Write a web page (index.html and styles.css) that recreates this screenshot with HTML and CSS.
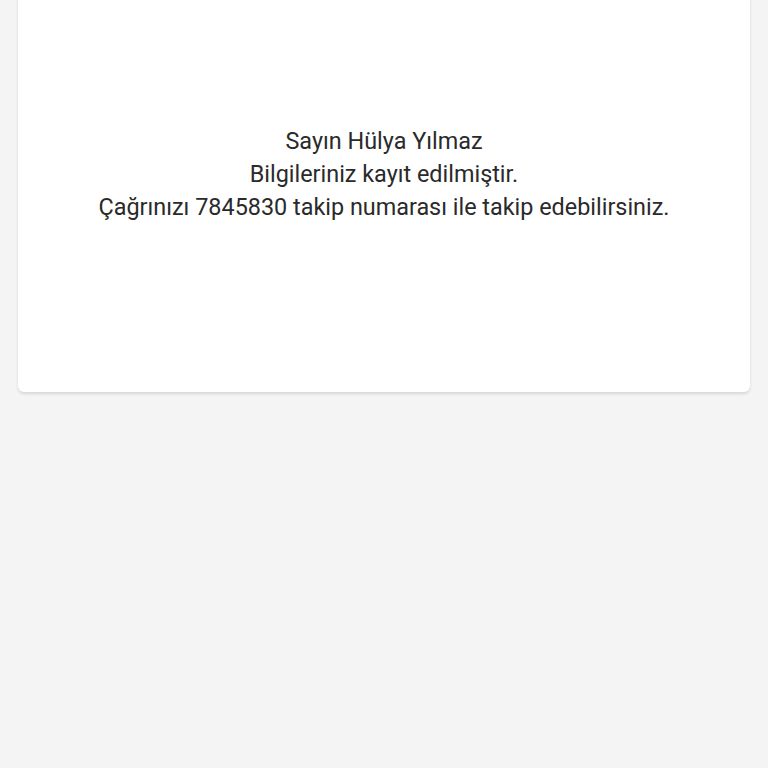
FILE: index.html
```html
<!DOCTYPE html>
<html lang="tr">
<head>
    <meta charset="UTF-8">
    <meta name="viewport" content="width=device-width, initial-scale=1.0">
    <title>Kayıt</title>
    <link rel="stylesheet" href="styles.css">
</head>
<body>
    <div class="page">
        <div class="card">
            <div class="message">
                <p>Sayın Hülya Yılmaz</p>
                <p>Bilgileriniz kayıt edilmiştir.</p>
                <p>Çağrınızı 7845830 takip numarası ile takip edebilirsiniz.</p>
            </div>
        </div>
    </div>
</body>
</html>
```

FILE: styles.css
```css
body {
    margin: 0;
    padding: 0;
    background: #f4f4f4;
    font-family: Roboto, 'Noto Sans', Arial, sans-serif;
    color: #2a2a2a;
    height: 100vh;
    overflow: hidden;
}

.page {
    padding: 0 18px;
}

.card {
    margin-top: -44px;
    height: 436px;
    background: #fff;
    border-radius: 6px;
    box-shadow: 0px 2px 3px rgba(0, 0, 0, 0.12);
    display: flex;
    justify-content: center;
    align-items: center;
}

.message {
    text-align: center;
    font-size: 23.4px;
    line-height: 33px;
}

.message p {
    margin: 0;
}
```
